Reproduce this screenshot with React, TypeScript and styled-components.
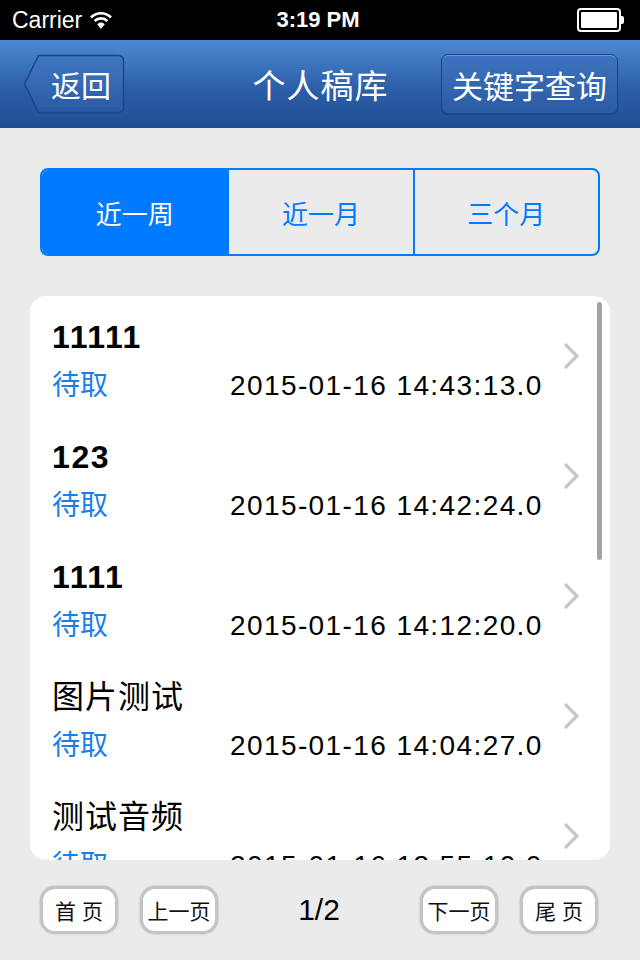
import React, { useState } from 'react';
import styled, { createGlobalStyle } from 'styled-components';

const FONT = `"Liberation Sans", "Noto Sans CJK SC", sans-serif`;

const GlobalStyle = createGlobalStyle`
  body {
    margin: 0;
    background: #ebebeb;
    font-family: ${FONT};
  }
`;

const records = [
  { title: '11111', bold: true, status: '待取', time: '2015-01-16 14:43:13.0' },
  { title: '123', bold: true, status: '待取', time: '2015-01-16 14:42:24.0' },
  { title: '1111', bold: true, status: '待取', time: '2015-01-16 14:12:20.0' },
  { title: '图片测试', bold: false, status: '待取', time: '2015-01-16 14:04:27.0' },
  { title: '测试音频', bold: false, status: '待取', time: '2015-01-16 13:55:10.0' },
];

const ranges = ['近一周', '近一月', '三个月'];

const Screen = styled.div`
  width: 640px;
  height: 960px;
  display: flex;
  flex-direction: column;
  background: #ebebeb;
  overflow: hidden;
`;

const StatusBar = styled.div`
  height: 40px;
  background: #000;
  color: #fff;
  display: grid;
  grid-template-columns: 1fr auto 1fr;
  align-items: center;
  padding: 0 16px 0 12px;
  font-size: 23px;
`;

const Carrier = styled.div`
  display: flex;
  align-items: center;
  gap: 8px;
`;

const Clock = styled.div`
  font-weight: bold;
  font-size: 22px;
`;

const Battery = styled.div`
  justify-self: end;
  display: flex;
  align-items: center;
`;

const BatteryBody = styled.div`
  width: 36px;
  height: 16px;
  border: 2px solid #fff;
  border-radius: 4px;
  padding: 2px;
  box-sizing: content-box;
  display: flex;
`;

const BatteryFill = styled.div`
  flex: 1;
  background: #fff;
  border-radius: 1px;
`;

const BatteryTip = styled.div`
  width: 3px;
  height: 8px;
  background: #fff;
  border-radius: 0 2px 2px 0;
`;

const NavBar = styled.div`
  height: 88px;
  background: linear-gradient(#4c89d2, #2c5fa8 55%, #1f4d94);
  display: grid;
  grid-template-columns: 1fr auto 1fr;
  align-items: center;
  padding: 0 22px 0 23px;
`;

const NavTitle = styled.div`
  color: #fff;
  font-size: 33px;
  letter-spacing: 1px;
`;

const BackButton = styled.button`
  justify-self: start;
  position: relative;
  width: 102px;
  height: 60px;
  padding: 0 0 0 14px;
  border: none;
  background: none;
  color: #fff;
  font-family: ${FONT};
  font-size: 30px;
  cursor: pointer;
`;

const BackShape = styled.svg`
  position: absolute;
  inset: 0;
`;

const BackLabel = styled.span`
  position: relative;
`;

const NavButton = styled.button`
  justify-self: end;
  height: 60px;
  padding: 0 10px;
  border: 1px solid #1c4583;
  border-radius: 7px;
  background: linear-gradient(#3d73bf, #2b5ba4);
  box-shadow: inset 0 1px 0 rgba(255, 255, 255, 0.25), 0 1px 1px rgba(0, 0, 0, 0.2);
  color: #fff;
  font-family: ${FONT};
  font-size: 31px;
  cursor: pointer;
`;

const Segmented = styled.div`
  margin: 40px 40px 0;
  height: 88px;
  display: grid;
  grid-template-columns: repeat(3, 1fr);
  border: 2px solid #007aff;
  border-radius: 8px;
  overflow: hidden;
  box-sizing: border-box;
`;

const Segment = styled.button<{ $active: boolean }>`
  border: none;
  border-left: 2px solid #007aff;
  &:first-child {
    border-left: none;
  }
  background: ${p => (p.$active ? '#007aff' : 'transparent')};
  color: ${p => (p.$active ? '#fff' : '#007aff')};
  font-family: ${FONT};
  font-size: 26px;
  cursor: pointer;
`;

const Card = styled.div`
  position: relative;
  margin: 40px 30px 0;
  height: 564px;
  background: #fff;
  border-radius: 16px;
  overflow: hidden;
`;

const Row = styled.div`
  height: 120px;
  padding: 21px 0 0 22px;
  box-sizing: border-box;
  display: grid;
  grid-template-columns: 1fr 48px;
`;

const RowMain = styled.div`
  display: flex;
  flex-direction: column;
`;

const RowTitle = styled.div<{ $bold: boolean }>`
  height: 40px;
  line-height: 40px;
  font-size: ${p => (p.$bold ? '32px' : '32px')};
  font-weight: ${p => (p.$bold ? 'bold' : 'normal')};
  letter-spacing: ${p => (p.$bold ? '1.6px' : '1px')};
  color: #000;
`;

const RowMeta = styled.div`
  margin-top: 9px;
  height: 40px;
  line-height: 40px;
  display: flex;
  font-size: 28px;
`;

const Status = styled.span`
  width: 178px;
  color: #1a7fea;
`;

const Time = styled.span`
  color: #000;
  letter-spacing: 1.4px;
`;

const Chevron = styled.div`
  display: flex;
  align-items: center;
  padding-bottom: 21px;
`;

const ScrollThumb = styled.div`
  position: absolute;
  top: 6px;
  right: 8px;
  width: 5px;
  height: 258px;
  border-radius: 3px;
  background: #a3a3a3;
`;

const Footer = styled.div`
  flex: 1;
  display: flex;
  align-items: center;
  justify-content: space-between;
  padding: 0 42px 0 40px;
`;

const PageGroup = styled.div`
  display: flex;
  gap: 22px;
`;

const PageButton = styled.button`
  width: 78px;
  height: 48px;
  padding: 0;
  border: 3px solid #c4c4c4;
  border-radius: 15px;
  background: #fff;
  box-shadow: 0 0 2px rgba(0, 0, 0, 0.25);
  color: #111;
  font-family: ${FONT};
  font-size: 21px;
  cursor: pointer;
`;

const PageCount = styled.div`
  font-size: 30px;
  color: #000;
`;

function Wifi() {
  return (
    <svg width="22" height="18" viewBox="0 0 22 18">
      <path d="M1 6.5 A14 14 0 0 1 21 6.5" stroke="#fff" strokeWidth="2.6" fill="none" />
      <path d="M4.6 10 A9 9 0 0 1 17.4 10" stroke="#fff" strokeWidth="2.6" fill="none" />
      <path d="M8 13.4 A4.3 4.3 0 0 1 14 13.4 L11 17 Z" fill="#fff" stroke="#fff" strokeWidth="1.2" />
    </svg>
  );
}

function App() {
  const [range, setRange] = useState(0);

  return (
    <Screen>
      <GlobalStyle />
      <StatusBar>
        <Carrier>Carrier <Wifi /></Carrier>
        <Clock>3:19 PM</Clock>
        <Battery>
          <BatteryBody><BatteryFill /></BatteryBody>
          <BatteryTip />
        </Battery>
      </StatusBar>

      <NavBar>
        <BackButton>
          <BackShape width="102" height="60" viewBox="0 0 102 60">
            <defs>
              <linearGradient id="backFill" x1="0" y1="0" x2="0" y2="1">
                <stop offset="0" stopColor="#4077c2" />
                <stop offset="1" stopColor="#2a5aa3" />
              </linearGradient>
            </defs>
            <path
              d="M15.5 1.5 H95 Q100.5 1.5 100.5 7 V53 Q100.5 58.5 95 58.5 H15.5 L1.5 30 Z"
              fill="url(#backFill)"
              stroke="#1c4583"
              strokeWidth="1.5"
            />
          </BackShape>
          <BackLabel>返回</BackLabel>
        </BackButton>
        <NavTitle>个人稿库</NavTitle>
        <NavButton>关键字查询</NavButton>
      </NavBar>

      <Segmented>
        {ranges.map((r, i) => (
          <Segment key={r} $active={i === range} onClick={() => setRange(i)}>{r}</Segment>
        ))}
      </Segmented>

      <Card>
        {records.map(r => (
          <Row key={r.time}>
            <RowMain>
              <RowTitle $bold={r.bold}>{r.title}</RowTitle>
              <RowMeta>
                <Status>{r.status}</Status>
                <Time>{r.time}</Time>
              </RowMeta>
            </RowMain>
            <Chevron>
              <svg width="18" height="28" viewBox="0 0 18 28">
                <polyline points="3,2 15,14 3,26" fill="none" stroke="#c7c7cc" strokeWidth="3.2" />
              </svg>
            </Chevron>
          </Row>
        ))}
        <ScrollThumb />
      </Card>

      <Footer>
        <PageGroup>
          <PageButton>首 页</PageButton>
          <PageButton>上一页</PageButton>
        </PageGroup>
        <PageCount>1/2</PageCount>
        <PageGroup>
          <PageButton>下一页</PageButton>
          <PageButton>尾 页</PageButton>
        </PageGroup>
      </Footer>
    </Screen>
  );
}

export default App;
